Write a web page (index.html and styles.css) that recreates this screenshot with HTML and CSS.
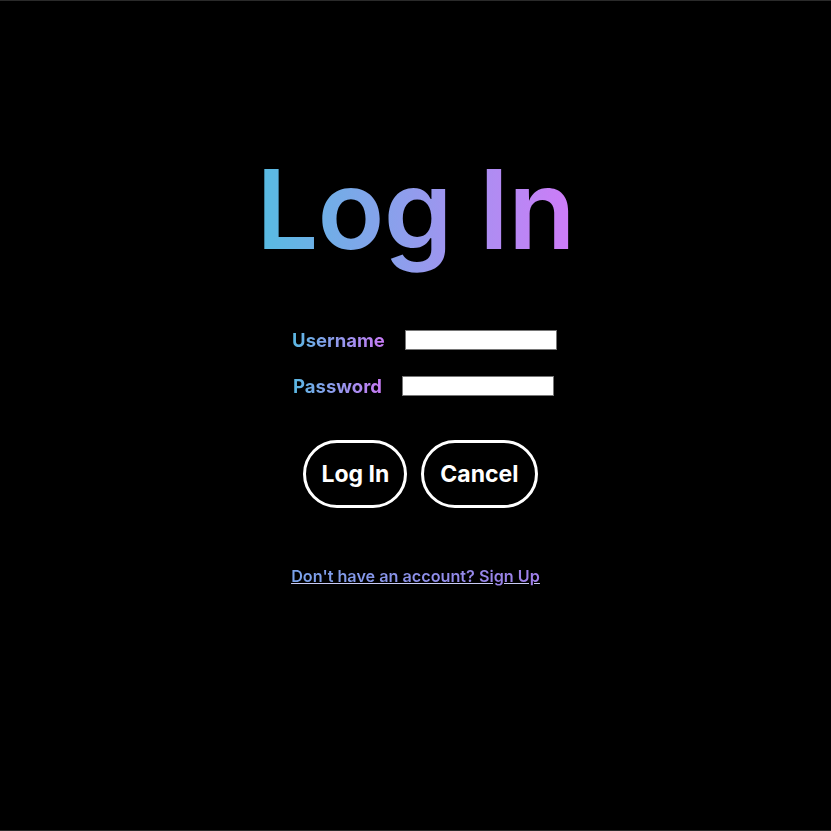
FILE: index.html
```html
<!DOCTYPE html>
<html lang="en">
<head>
<meta charset="utf-8">
<title>Log In</title>
<link rel="stylesheet" href="styles.css">
</head>
<body>
<main class="page">
  <h1 class="title">Log In</h1>
  <form class="form">
    <div class="row row-user">
      <label class="label" for="u">Username</label>
      <input class="field" id="u" type="text">
    </div>
    <div class="row row-pass">
      <label class="label" for="p">Password</label>
      <input class="field" id="p" type="password">
    </div>
    <div class="buttons">
      <button type="button" class="btn">Log In</button>
      <button type="button" class="btn">Cancel</button>
    </div>
  </form>
  <a class="signup" href="#"><span class="signup-text">Don't have an account? Sign Up</span></a>
</main>
</body>
</html>
```
FILE: styles.css
```css
html, body {
  margin: 0;
  padding: 0;
  background: #000;
}
body {
  font-family: Inter, "DejaVu Sans", sans-serif;
  height: 831px;
  box-sizing: border-box;
  border-top: 1px solid #2a2a2a;
  border-bottom: 1px solid #2a2a2a;
}
.page {
  display: flex;
  flex-direction: column;
  align-items: center;
  padding-top: 138px;
}
.title {
  margin: 0;
  font-size: 110px;
  font-weight: 600;
  letter-spacing: -0.8px;
  line-height: 140px;
  background: linear-gradient(90deg, #56bce2, #cf7bf8);
  -webkit-background-clip: text;
  background-clip: text;
  color: transparent;
}
.form {
  display: flex;
  flex-direction: column;
  align-items: center;
  margin-top: 51px;
}
.row {
  display: flex;
  align-items: center;
  gap: 20px;
  height: 20px;
  padding-left: 16px;
}
.row-user { margin-left: 2px; }
.row-pass { margin-top: 26px; }
.label {
  font-size: 18.5px;
  font-weight: 700;
  background: linear-gradient(90deg, #5ab8e3, #c97af6);
  -webkit-background-clip: text;
  background-clip: text;
  color: transparent;
}
.field {
  width: 152px;
  height: 20px;
  box-sizing: border-box;
  border: 1px solid #767676;
  background: #fff;
  margin: 0;
  padding: 0;
}
.buttons {
  display: flex;
  gap: 14px;
  margin-top: 44px;
  margin-left: 10px;
}
.btn {
  height: 68px;
  padding: 0 15px;
  border: 3px solid #fff;
  border-radius: 34px;
  background: #000;
  color: #fff;
  font-family: Inter, "DejaVu Sans", sans-serif;
  font-size: 23px;
  font-weight: 700;
}
.btn + .btn { padding: 0 16px; }
.signup {
  margin-top: 58px;
  font-size: 16.2px;
  font-weight: 600;
  color: #c9cbf6;
  text-decoration: underline;
  text-decoration-color: #c9cbf6;
}
.signup-text {
  background: linear-gradient(90deg, #7aa3eb, #a07ee9);
  -webkit-background-clip: text;
  background-clip: text;
  color: transparent;
}
```
